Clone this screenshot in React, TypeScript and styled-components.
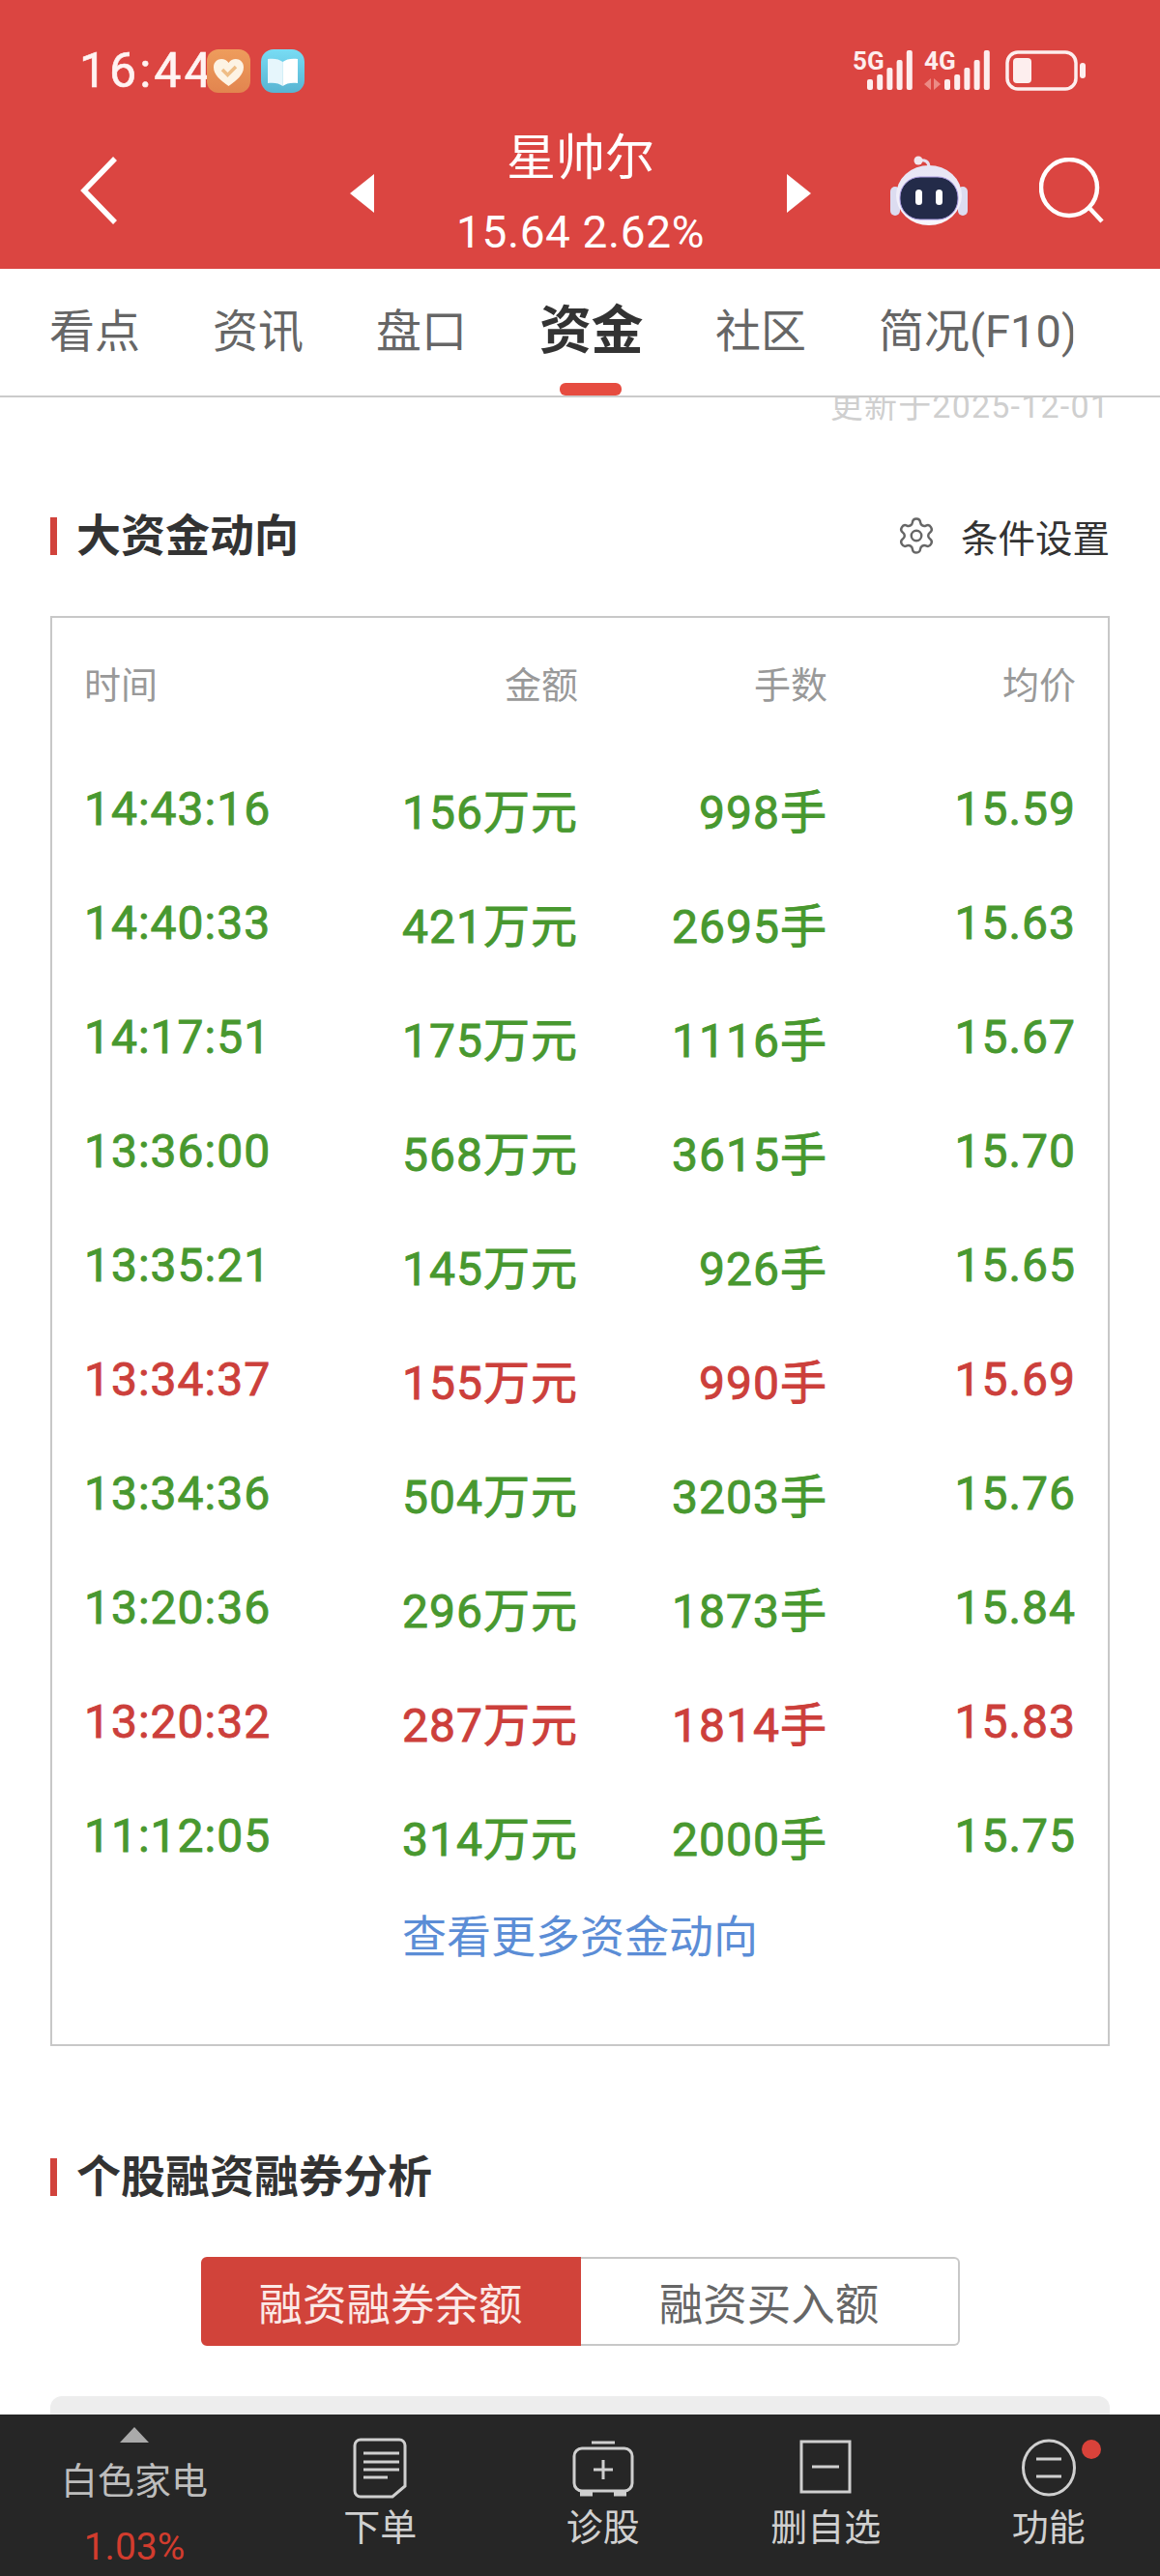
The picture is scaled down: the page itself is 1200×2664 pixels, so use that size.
import React from 'react';
import styled, { createGlobalStyle } from 'styled-components';
import { Settings } from 'lucide-react';

const FONT = `Roboto, 'Noto Sans CJK SC', sans-serif`;
const NARROW = `'Liberation Sans Narrow', Roboto, 'Noto Sans CJK SC', sans-serif`;

const TABS = ['看点', '资讯', '盘口', '资金', '社区', '简况(F10)', '财务'];
const ACTIVE_TAB = '资金';

type Trade = { time: string; amount: string; volume: string; price: string; up?: boolean };

const TRADES: Trade[] = [
	{ time: '14:43:16', amount: '156', volume: '998', price: '15.59' },
	{ time: '14:40:33', amount: '421', volume: '2695', price: '15.63' },
	{ time: '14:17:51', amount: '175', volume: '1116', price: '15.67' },
	{ time: '13:36:00', amount: '568', volume: '3615', price: '15.70' },
	{ time: '13:35:21', amount: '145', volume: '926', price: '15.65' },
	{ time: '13:34:37', amount: '155', volume: '990', price: '15.69', up: true },
	{ time: '13:34:36', amount: '504', volume: '3203', price: '15.76' },
	{ time: '13:20:36', amount: '296', volume: '1873', price: '15.84' },
	{ time: '13:20:32', amount: '287', volume: '1814', price: '15.83', up: true },
	{ time: '11:12:05', amount: '314', volume: '2000', price: '15.75' },
];

const SIGNAL_TOPS = [32, 27, 20, 12, 2];

function SignalBars({ x }: { x: number }) {
	return (
		<>
			{SIGNAL_TOPS.map((top, i) => (
				<rect key={i} x={x + i * 10.2} y={top} width={6} height={43 - top} rx={2} fill='#fdeeee' />
			))}
		</>
	);
}

function StatusIcons() {
	return (
		<svg width='245' height='45' viewBox='0 0 245 45' fill='none'>
			<text x='2' y='22' fontFamily={NARROW} fontSize='26' fontWeight='700' fill='#fdeeee'>
				5G
			</text>
			<SignalBars x={17} />
			<text x='76' y='22' fontFamily={NARROW} fontSize='26' fontWeight='700' fill='#fdeeee'>
				4G
			</text>
			<path d='M83 31v12l-7-6zM86 43V31l7 6z' fill='#ec8b85' />
			<SignalBars x={97} />
			<rect x='162' y='4' width='71' height='38' rx='11' stroke='#fdeeee' strokeWidth='3.5' />
			<rect x='168' y='10' width='19' height='26' rx='4' fill='#fdeeee' />
			<rect x='237' y='15' width='6' height='16' rx='3' fill='#fdeeee' />
		</svg>
	);
}

function HeartApp() {
	return (
		<svg width='45' height='45' viewBox='0 0 45 45'>
			<defs>
				<linearGradient id='heartBg' x1='0' y1='0' x2='0' y2='1'>
					<stop offset='0' stopColor='#ee9c5c' />
					<stop offset='1' stopColor='#e2854f' />
				</linearGradient>
			</defs>
			<rect width='45' height='45' rx='12' fill='url(#heartBg)' />
			<path
				d='M22.5 38C14 32 7 26.500 7 18.500 7 13 11 10 15 10c3.200 0 5.800 1.500 7.500 4 1.700-2.500 4.300-4 7.500-4 4 0 8 3 8 8.500C38 26.500 31 32 22.500 38z'
				fill='#fdf3e4'
			/>
			<path d='M16 21l5.500 5.500L30 18' fill='none' stroke='#efbd86' strokeWidth='3.500' />
		</svg>
	);
}

function BookApp() {
	return (
		<svg width='45' height='45' viewBox='0 0 45 45'>
			<defs>
				<linearGradient id='bookBg' x1='0' y1='0' x2='0' y2='1'>
					<stop offset='0' stopColor='#78dcf4' />
					<stop offset='1' stopColor='#58b4d2' />
				</linearGradient>
			</defs>
			<rect width='45' height='45' rx='13' fill='url(#bookBg)' />
			<path d='M7 10c6-1 12 0 15.500 3v25C19 35 13 34 7 35z' fill='#e6f6fc' />
			<path d='M38 10c-6-1-12 0-15.500 3v25C26 35 32 34 38 35z' fill='#ffffff' />
		</svg>
	);
}

function BackIcon() {
	return (
		<svg width='39' height='72' viewBox='0 0 39 72' fill='none'>
			<path d='M36 3L4 36l32 33' stroke='#fff' strokeWidth='5.500' />
		</svg>
	);
}

function RobotIcon() {
	return (
		<svg width='80' height='72' viewBox='0 0 80 72'>
			<defs>
				<linearGradient id='robotHead' x1='0' y1='0' x2='0' y2='1'>
					<stop offset='0' stopColor='#e6e4f4' />
					<stop offset='1' stopColor='#f8f6fd' />
				</linearGradient>
			</defs>
			<path d='M30 5c6-1 10 1 10 7' fill='none' stroke='#e8dff0' strokeWidth='3' />
			<circle cx='29' cy='5' r='4.500' fill='#f1e6ee' />
			<rect x='0' y='32' width='10' height='30' rx='5' fill='#dcdcf0' />
			<rect x='70' y='32' width='10' height='30' rx='5' fill='#dcdcf0' />
			<ellipse cx='40' cy='41' rx='34' ry='31' fill='url(#robotHead)' />
			<rect x='10' y='22' width='60' height='44' rx='21' fill='#232b49' stroke='#a99ae0' strokeWidth='1' />
			<rect x='26' y='35' width='7' height='16' rx='3.500' fill='#fff' />
			<rect x='47' y='35' width='7' height='16' rx='3.500' fill='#fff' />
		</svg>
	);
}

function SearchIcon() {
	return (
		<svg width='68' height='68' viewBox='0 0 68 68' fill='none' stroke='#fff' strokeWidth='4.500'>
			<circle cx='31' cy='31' r='29' />
			<path d='M51 51l14 15' />
		</svg>
	);
}

function OrderIcon() {
	return (
		<BarSvg viewBox='0 0 64 64'>
			<path d='M12 3h40a6 6 0 0 1 6 6v42L45 62H12a6 6 0 0 1-6-6V9a6 6 0 0 1 6-6z' />
			<path d='M15 17h37M15 26h37M15 34h37M15 42h25' />
		</BarSvg>
	);
}

function DiagnoseIcon() {
	return (
		<BarSvg viewBox='0 0 64 64'>
			<path d='M20 6h24' />
			<rect x='2' y='12' width='60' height='44' rx='8' />
			<path d='M32 24v20M22 34h20' />
			<path d='M8 59h13M43 59h13' strokeWidth='5' />
		</BarSvg>
	);
}

function RemoveIcon() {
	return (
		<BarSvg viewBox='0 0 64 64'>
			<rect x='7' y='5' width='50' height='52' />
			<path d='M18 31h28' />
		</BarSvg>
	);
}

function MoreIcon() {
	return (
		<BarSvg viewBox='0 0 64 64'>
			<ellipse cx='32' cy='32' rx='26.500' ry='28' />
			<path d='M19 23h26M19 41h26' />
		</BarSvg>
	);
}

export default function App() {
	return (
		<>
			<GlobalStyle />
			<Page>
				<Header>
					<StatusBar>
						<StatusLeft>
							<Clock>16:44</Clock>
							<HeartApp />
							<BookApp />
						</StatusLeft>
						<StatusIcons />
					</StatusBar>
					<NavRow>
						<IconSlot>
							<BackIcon />
						</IconSlot>
						<Switcher>
							<Arrow $side='left' />
							<TitleBlock>
								<StockName>星帅尔</StockName>
								<StockPrice>15.64 2.62%</StockPrice>
							</TitleBlock>
							<Arrow $side='right' />
						</Switcher>
						<Actions>
							<RobotIcon />
							<SearchIcon />
						</Actions>
					</NavRow>
				</Header>

				<TabBar>
					{TABS.map((tab) => (
						<Tab key={tab} $active={tab === ACTIVE_TAB}>
							{tab}
						</Tab>
					))}
					<TabFade />
				</TabBar>

				<Main>
					<UpdatedRow>
						<UpdatedText>更新于2025-12-01</UpdatedText>
					</UpdatedRow>

					<SectionHead $top={92}>
						<SectionTitle>大资金动向</SectionTitle>
						<SectionAction>
							<Settings size={42} strokeWidth={1.4} color='#666' />
							条件设置
						</SectionAction>
					</SectionHead>

					<TableBox>
						<HeadRow>
							<HeadCell>时间</HeadCell>
							<HeadCell>金额</HeadCell>
							<HeadCell>手数</HeadCell>
							<HeadCell>均价</HeadCell>
						</HeadRow>
						{TRADES.map((t) => (
							<TradeRow key={t.time} $up={t.up}>
								<span>{t.time}</span>
								<span>{t.amount}万元</span>
								<span>{t.volume}手</span>
								<span>{t.price}</span>
							</TradeRow>
						))}
						<MoreLink>查看更多资金动向</MoreLink>
					</TableBox>

					<SectionHead $top={110}>
						<SectionTitle>个股融资融券分析</SectionTitle>
					</SectionHead>

					<Segments>
						<Segment $active>融资融券余额</Segment>
						<Segment>融资买入额</Segment>
					</Segments>

					<ChartPanel />
				</Main>

				<BottomBar>
					<BarCell>
						<UpTriangle />
						<IndustryName>白色家电</IndustryName>
						<IndustryChange>1.03%</IndustryChange>
					</BarCell>
					<BarCell>
						<OrderIcon />
						<BarLabel>下单</BarLabel>
					</BarCell>
					<BarCell>
						<DiagnoseIcon />
						<BarLabel>诊股</BarLabel>
					</BarCell>
					<BarCell>
						<RemoveIcon />
						<BarLabel>删自选</BarLabel>
					</BarCell>
					<BarCell>
						<MoreIcon />
						<Dot />
						<BarLabel>功能</BarLabel>
					</BarCell>
				</BottomBar>
			</Page>
		</>
	);
}

const GlobalStyle = createGlobalStyle`
	html, body {
		margin: 0;
		padding: 0;
		background: #fff;
	}
	* {
		box-sizing: border-box;
	}
`;

const Page = styled.div`
	width: 1200px;
	height: 2664px;
	display: flex;
	flex-direction: column;
	overflow: hidden;
	background: #fff;
	font-family: ${FONT};
`;

const Header = styled.header`
	height: 278px;
	flex: none;
	background: #db4541;
	color: #fff;
`;

const StatusBar = styled.div`
	height: 126px;
	padding: 50px 75px 0 82px;
	display: flex;
	justify-content: space-between;
	align-items: flex-start;
`;

const StatusLeft = styled.div`
	display: flex;
	align-items: center;
	gap: 11px;
`;

const Clock = styled.span`
	width: 121px;
	font-family: ${NARROW};
	font-size: 50px;
	line-height: 46px;
	font-weight: 400;
	letter-spacing: 3px;
	color: #fff3f2;
	-webkit-text-stroke: 0.6px #fff3f2;
`;

const NavRow = styled.div`
	height: 152px;
	padding-left: 83px;
	display: flex;
	align-items: center;
`;

const IconSlot = styled.div`
	display: flex;
	margin-bottom: 10px;
`;

const Switcher = styled.div`
	width: 477px;
	margin-left: 240px;
	display: flex;
	align-items: center;
	justify-content: space-between;
`;

const Arrow = styled.div<{ $side: 'left' | 'right' }>`
	width: 0;
	height: 0;
	margin-bottom: 4px;
	border-top: 20px solid transparent;
	border-bottom: 20px solid transparent;
	border-${(p) => (p.$side === 'left' ? 'right' : 'left')}: 25px solid #fff;
`;

const TitleBlock = styled.div`
	display: flex;
	flex-direction: column;
	align-items: center;
`;

const StockName = styled.div`
	font-size: 51px;
	line-height: 76px;
`;

const StockPrice = styled.div`
	font-family: ${NARROW};
	font-size: 46px;
	line-height: 76px;
	letter-spacing: 0.6px;
`;

const Actions = styled.div`
	margin-left: 82px;
	display: flex;
	align-items: center;
	gap: 74px;
	margin-bottom: 10px;
`;

const TabBar = styled.nav`
	position: relative;
	z-index: 1;
	height: 133px;
	flex: none;
	padding: 0 0 0 51px;
	display: flex;
	gap: 75px;
	background: #fff;
	border-bottom: 2px solid #cbcbcb;
	overflow: hidden;
`;

const Tab = styled.div<{ $active?: boolean }>`
	position: relative;
	flex: none;
	height: 131px;
	line-height: 130px;
	font-size: ${(p) => (p.$active ? 54 : 47)}px;
	font-weight: ${(p) => (p.$active ? 700 : 400)};
	color: ${(p) => (p.$active ? '#333' : '#666')};
	letter-spacing: ${(p) => (p.$active ? '-0.5px' : 0)};

	&::after {
		content: '';
		display: ${(p) => (p.$active ? 'block' : 'none')};
		position: absolute;
		left: 21px;
		bottom: 0;
		width: 64px;
		height: 13px;
		border-radius: 6px;
		background: #e64c40;
	}
`;

const TabFade = styled.div`
	position: absolute;
	top: 0;
	right: 0;
	bottom: 0;
	width: 90px;
	background: linear-gradient(to right, rgba(255, 255, 255, 0.82), #fff 70%);
`;

const Main = styled.main`
	flex: 1;
	min-height: 0;
	padding: 0 52px;
	overflow: hidden;
`;

const UpdatedRow = styled.div`
	height: 26px;
	overflow: hidden;
	display: flex;
	justify-content: flex-end;
`;

const UpdatedText = styled.div`
	margin-top: -16px;
	font-size: 34px;
	line-height: 50px;
	letter-spacing: 1.2px;
	color: #cfcfcf;
`;

const SectionHead = styled.div<{ $top: number }>`
	height: 50px;
	margin-top: ${(p) => p.$top}px;
	display: flex;
	align-items: center;
	justify-content: space-between;
`;

const SectionTitle = styled.h2`
	margin: 0;
	padding-left: 27px;
	position: relative;
	font-size: 46px;
	line-height: 50px;
	font-weight: 700;
	color: #333;

	&::before {
		content: '';
		position: absolute;
		left: 0;
		top: 6px;
		width: 7px;
		height: 39px;
		background: #d1433c;
	}
`;

const SectionAction = styled.div`
	display: flex;
	align-items: center;
	gap: 25px;
	font-size: 38.500px;
	color: #333;
`;

const TableBox = styled.section`
	margin-top: 58px;
	height: 1479px;
	padding: 0 33px;
	border: 2px solid #c8c8c8;
`;

const HeadRow = styled.div`
	height: 138px;
	display: grid;
	grid-template-columns: 252px 259px 258px 257px;
	align-items: center;
`;

const HeadCell = styled.div`
	font-size: 38px;
	line-height: 140px;
	color: #999;
	text-align: right;

	&:first-child {
		text-align: left;
	}
`;

const TradeRow = styled.div<{ $up?: boolean }>`
	height: 118px;
	display: grid;
	grid-template-columns: 252px 259px 258px 257px;
	align-items: center;
	font-family: ${NARROW};
	font-size: 48px;
	letter-spacing: 1px;
	color: ${(p) => (p.$up ? '#cc3f3b' : '#48982f')};
	-webkit-text-stroke: 0.9px ${(p) => (p.$up ? '#cc3f3b' : '#48982f')};

	span {
		text-align: right;
	}

	span:first-child {
		text-align: left;
	}
`;

const MoreLink = styled.div`
	margin-top: 16px;
	font-size: 46px;
	line-height: 60px;
	text-align: center;
	color: #5b8dd6;
`;

const Segments = styled.div`
	margin: 58px auto 0;
	width: 785px;
	height: 92px;
	display: grid;
	grid-template-columns: 393px 392px;
`;

const Segment = styled.div<{ $active?: boolean }>`
	display: flex;
	align-items: center;
	justify-content: center;
	font-size: 45.500px;
	color: ${(p) => (p.$active ? '#fbe9e7' : '#666')};
	background: ${(p) => (p.$active ? '#d1433a' : '#fff')};
	border: 2px solid ${(p) => (p.$active ? '#d1433a' : '#c8c8c8')};
	border-left-width: ${(p) => (p.$active ? 2 : 0)}px;
	border-radius: ${(p) => (p.$active ? '6px 0 0 6px' : '0 6px 6px 0')};
`;

const ChartPanel = styled.div`
	margin-top: 52px;
	height: 200px;
	background: #ededed;
	border-radius: 12px;
`;

const BottomBar = styled.footer`
	position: absolute;
	left: 0;
	top: 2497px;
	width: 1200px;
	height: 167px;
	display: grid;
	grid-template-columns: 278px repeat(4, 1fr);
	background: #262626;
`;

const BarCell = styled.div`
	position: relative;
	display: flex;
	flex-direction: column;
	align-items: center;
	padding-top: 23px;
`;

const BarSvg = styled.svg.attrs({ width: 64, height: 64, fill: 'none' })`
	flex: none;
	stroke: #cfcfcf;
	stroke-width: 3;
`;

const BarLabel = styled.div`
	margin-top: 5px;
	font-size: 38px;
	line-height: 50px;
	color: #d0d0d0;
`;

const UpTriangle = styled.div`
	width: 0;
	height: 0;
	margin-top: -10px;
	border-left: 15px solid transparent;
	border-right: 15px solid transparent;
	border-bottom: 16px solid #aaa;
`;

const IndustryName = styled.div`
	margin-top: 15px;
	font-size: 38px;
	line-height: 50px;
	color: #bdbdbd;
`;

const IndustryChange = styled.div`
	margin-top: 20px;
	font-size: 39px;
	line-height: 46px;
	color: #d23c2e;
`;

const Dot = styled.div`
	position: absolute;
	top: 26px;
	left: 149px;
	width: 20px;
	height: 20px;
	border-radius: 50%;
	background: #d9423a;
`;
